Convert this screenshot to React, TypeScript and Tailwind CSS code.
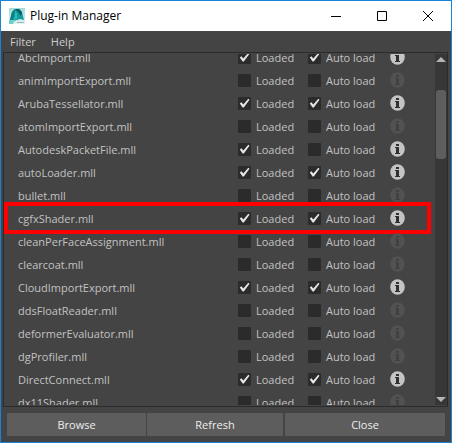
import { useState } from "react";

type Plugin = { name: string; loaded: boolean; auto: boolean; info: boolean; marked?: boolean };

const plugins: Plugin[] = [
  { name: "AbcImport.mll", loaded: true, auto: true, info: true },
  { name: "animImportExport.mll", loaded: false, auto: false, info: false },
  { name: "ArubaTessellator.mll", loaded: true, auto: true, info: true },
  { name: "atomImportExport.mll", loaded: false, auto: false, info: false },
  { name: "AutodeskPacketFile.mll", loaded: true, auto: false, info: true },
  { name: "autoLoader.mll", loaded: true, auto: true, info: true },
  { name: "bullet.mll", loaded: false, auto: false, info: false },
  { name: "cgfxShader.mll", loaded: true, auto: true, info: true, marked: true },
  { name: "cleanPerFaceAssignment.mll", loaded: false, auto: false, info: false },
  { name: "clearcoat.mll", loaded: false, auto: false, info: false },
  { name: "CloudImportExport.mll", loaded: true, auto: true, info: true },
  { name: "ddsFloatReader.mll", loaded: false, auto: false, info: false },
  { name: "deformerEvaluator.mll", loaded: false, auto: false, info: false },
  { name: "dgProfiler.mll", loaded: false, auto: false, info: false },
  { name: "DirectConnect.mll", loaded: true, auto: true, info: true },
  { name: "dx11Shader.mll", loaded: false, auto: false, info: false },
];

function Check({ label, initial }: { label: string; initial: boolean }) {
  const [on, setOn] = useState(initial);
  return (
    <label className="flex items-center gap-[5px] whitespace-nowrap">
      <span className="grid size-[13px] shrink-0">
        <input
          type="checkbox"
          checked={on}
          onChange={(e) => setOn(e.target.checked)}
          className="col-start-1 row-start-1 size-[13px] appearance-none rounded-[1px] bg-[#2b2b2b]"
        />
        {on && (
          <svg viewBox="0 0 13 13" className="pointer-events-none col-start-1 row-start-1 size-[13px]">
            <path d="M1.8 6.4 L3.4 5.2 L5.3 7.6 L10.3 1.8 L11.5 2.8 L5.8 10.6 L4.6 10.6 Z" fill="#e6e6e6" />
          </svg>
        )}
      </span>
      {label}
    </label>
  );
}

function InfoIcon({ active }: { active: boolean }) {
  return (
    <svg viewBox="0 0 15 16" className="h-4 w-[15px]">
      <ellipse cx="7.5" cy="8" rx="7.3" ry="7.8" fill={active ? "#c4c4c4" : "#525252"} />
      <path
        d="M6 3h3v2H6z M5 6h4v6h1v1H5v-1h1V7H5z"
        fill={active ? "#303030" : "#414141"}
      />
    </svg>
  );
}

function Row({ plugin }: { plugin: Plugin }) {
  return (
    <li className="relative flex h-[23px] items-center pr-[30px] pl-[14px]">
      <span className="min-w-0 flex-1">{plugin.name}</span>
      <div className="w-[70px]">
        <Check label="Loaded" initial={plugin.loaded} />
      </div>
      <div className="w-[82px]">
        <Check label="Auto load" initial={plugin.auto} />
      </div>
      <button type="button" aria-label={`${plugin.name} info`} disabled={!plugin.info} className="-mt-px">
        <InfoIcon active={plugin.info} />
      </button>
      {plugin.marked && (
        <div className="pointer-events-none absolute -top-[5px] right-1 -bottom-1 left-0 border-4 border-[#ff0000]" />
      )}
    </li>
  );
}

function TitleBar() {
  return (
    <header className="flex h-[30px] shrink-0 items-center bg-white pl-2 text-black">
      <svg viewBox="0 0 16 16" className="mr-[5px] size-4">
        <defs>
          <linearGradient id="tile" x1="0" y1="0" x2="0" y2="1">
            <stop offset="0" stopColor="#9fdcd9" />
            <stop offset="0.6" stopColor="#c4e8e6" />
            <stop offset="1" stopColor="#e6f2f2" />
          </linearGradient>
        </defs>
        <path d="M0 0h16v16H0z" fill="url(#tile)" />
        <path d="M1 12 L3 4 L6 1 L10 1 L13 4 L15 12 L11 11 L8 12 L5 13 Z" fill="#149a9b" />
        <path d="M3 4 L6 1 L6 8 L3 12 L1 12 Z" fill="#0b7f83" />
        <path d="M6 1 L10 1 L13 4 L12 8 L9 4 Z" fill="#075f66" />
        <path d="M6 3 L8 5 L8 11 L5 12 Z" fill="#22bcba" />
        <path d="M0 12 L6 12 L4 16 L0 16 Z" fill="#6fd0cc" />
        <path d="M8 14.5h7" stroke="#9fb6b8" strokeWidth="1" />
      </svg>
      <h1 className="flex-1 text-[12px]">Plug-in Manager</h1>
      <button type="button" aria-label="Minimize" className="grid h-full w-[46px] place-items-center">
        <svg viewBox="0 0 10 10" className="size-[10px]">
          <path d="M0 5.5h10" stroke="#000" />
        </svg>
      </button>
      <button type="button" aria-label="Maximize" className="grid h-full w-[46px] place-items-center">
        <svg viewBox="0 0 10 10" className="size-[10px]">
          <path d="M.5 .5h9v9h-9z" fill="none" stroke="#000" />
        </svg>
      </button>
      <button type="button" aria-label="Close window" className="grid h-full w-[46px] place-items-center">
        <svg viewBox="0 0 10 10" className="size-[10px]">
          <path d="M0 0L10 10M10 0L0 10" stroke="#000" />
        </svg>
      </button>
    </header>
  );
}

function ScrollBar() {
  return (
    <div className="flex w-3 shrink-0 flex-col items-center bg-[#373737] py-[3px]">
      <svg viewBox="0 0 10 5" className="h-[5px] w-[10px]">
        <path d="M5 0L10 5H0z" fill="#b4b4b4" />
      </svg>
      <div className="mt-7 h-[69px] w-[10px] rounded-[3px] bg-[#5e5e5e]" />
      <svg viewBox="0 0 10 5" className="mt-auto h-[5px] w-[10px]">
        <path d="M0 0H10L5 5z" fill="#b4b4b4" />
      </svg>
    </div>
  );
}

export default function App() {
  const button = "h-[23px] basis-0 rounded-[1px] bg-[#5d5d5d] text-[#eeeeee]";
  return (
    <div className="flex h-screen flex-col border border-[#1883d7] bg-[#444444] font-['Open_Sans','Noto_Sans',sans-serif] text-[11px] leading-4 text-[#c2c2c2]">
      <TitleBar />
      <nav className="flex h-[21px] shrink-0 items-center gap-[15px] pl-[9px] text-[#cccccc]">
        <button type="button">Filter</button>
        <button type="button">Help</button>
      </nav>
      <main className="mr-[3px] ml-[2px] flex min-h-0 flex-1 border border-[#2b2b2b] py-px">
        <div className="min-w-0 flex-1 overflow-hidden">
          {/* the list is scrolled part of a row down */}
          <ul className="-mt-2">
            {plugins.map((p) => (
              <Row key={p.name} plugin={p} />
            ))}
          </ul>
        </div>
        <ScrollBar />
      </main>
      <footer className="flex shrink-0 gap-px p-[6px]">
        <button type="button" className={`${button} grow-[139]`}>Browse</button>
        <button type="button" className={`${button} grow-[136]`}>Refresh</button>
        <button type="button" className={`${button} ml-px grow-[160]`}>Close</button>
      </footer>
    </div>
  );
}
